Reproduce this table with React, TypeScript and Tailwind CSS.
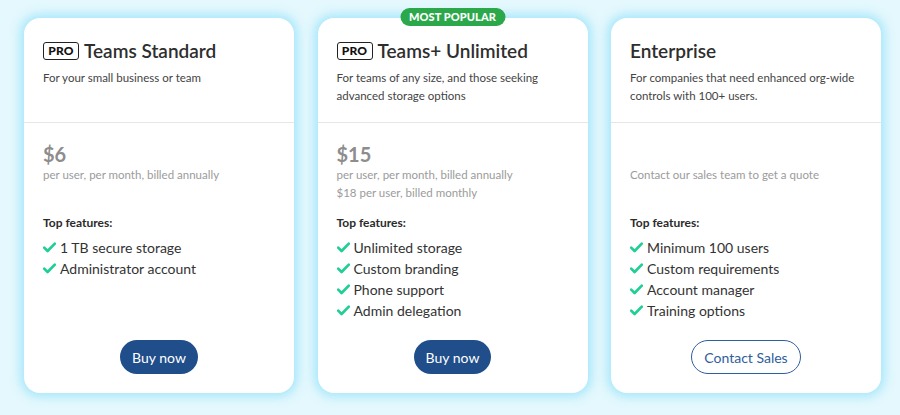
import React from "react";

const Check = () => (
  <svg width="13" height="11" viewBox="0 0 13 11" className="shrink-0 mr-[4px]">
    <path d="M1.2 5.6 L4.6 9 L11.8 1.6" fill="none" stroke="#1fcf93" strokeWidth="2.7" strokeLinecap="round" strokeLinejoin="round" />
  </svg>
);

const Pro = () => (
  <span className="inline-flex items-center justify-center h-[18px] w-[36px] border-[1.5px] border-[#222] rounded-[3px] text-[12px] font-black text-[#111] leading-none mr-[5px] tracking-[0.2px]">
    PRO
  </span>
);

type Plan = {
  pro: boolean;
  title: string;
  desc: string;
  price?: string;
  lines: string[];
  features: string[];
  cta: string;
  outline?: boolean;
  popular?: boolean;
};

const plans: Plan[] = [
  {
    pro: true,
    title: "Teams Standard",
    desc: "For your small business or team",
    price: "$6",
    lines: ["per user, per month, billed annually"],
    features: ["1 TB secure storage", "Administrator account"],
    cta: "Buy now",
  },
  {
    pro: true,
    title: "Teams+ Unlimited",
    desc: "For teams of any size, and those seeking advanced storage options",
    price: "$15",
    lines: ["per user, per month, billed annually", "$18 per user, billed monthly"],
    features: ["Unlimited storage", "Custom branding", "Phone support", "Admin delegation"],
    cta: "Buy now",
    popular: true,
  },
  {
    pro: false,
    title: "Enterprise",
    desc: "For companies that need enhanced org-wide controls with 100+ users.",
    lines: ["Contact our sales team to get a quote"],
    features: ["Minimum 100 users", "Custom requirements", "Account manager", "Training options"],
    cta: "Contact Sales",
    outline: true,
  },
];

export default function App() {
  return (
    <div
      className="w-[900px] h-[415px] bg-[#e4f8fd] overflow-hidden pt-[18px] pl-[24px]"
      style={{ fontFamily: "Lato, 'Open Sans', sans-serif" }}
    >
      <div className="grid grid-cols-[270px_270px_270px] gap-x-[23.5px] items-stretch">
        {plans.map((p) => (
          <div
            key={p.title}
            className="relative bg-white rounded-[16px] flex flex-col h-[375px] shadow-[0_0_10px_4px_rgba(150,226,250,0.75)]"
          >
            {p.popular && (
              <div className="absolute top-[-10px] left-1/2 -translate-x-1/2 h-[18px] w-[105px] rounded-full bg-[#2aa84a] text-white text-[11px] font-black flex items-center justify-center tracking-[0.1px]">
                MOST POPULAR
              </div>
            )}
            <div className="h-[105px] border-b border-[#e6e6e6] px-[19px] pt-[21px]">
              <div className="flex items-center h-[24px]">
                {p.pro && <Pro />}
                <span className="text-[19px] font-semibold text-[#2e2e2e] leading-[24px]">{p.title}</span>
              </div>
              <p className="mt-[6px] text-[11.5px] leading-[18px] text-[#444] max-w-[228px]">{p.desc}</p>
            </div>
            <div className="px-[19px] pt-[19px] h-[91px]">
              <div className="h-[24px] text-[20px] font-bold text-[#8d8d8d] leading-[24px]">{p.price}</div>
              {p.lines.map((l) => (
                <div key={l} className="text-[11.5px] leading-[18px] text-[#9b9b9b]">
                  {l}
                </div>
              ))}
            </div>
            <div className="px-[19px]">
              <div className="text-[12px] leading-[18px] font-bold text-[#2b2b2b]">Top features:</div>
              <ul className="mt-[5px]">
                {p.features.map((f) => (
                  <li key={f} className="flex items-center h-[21px] text-[14px] text-[#333]">
                    <Check />
                    {f}
                  </li>
                ))}
              </ul>
            </div>
            <div className="mt-auto pb-[19px] flex justify-center">
              {p.outline ? (
                <button className="h-[34px] px-[12px] rounded-full border border-[#2f5e9c] text-[#2f5e9c] text-[14px] bg-white">
                  {p.cta}
                </button>
              ) : (
                <button className="h-[34px] px-[12px] rounded-full bg-[#1f4e8a] text-white text-[14px]">
                  {p.cta}
                </button>
              )}
            </div>
          </div>
        ))}
      </div>
    </div>
  );
}
